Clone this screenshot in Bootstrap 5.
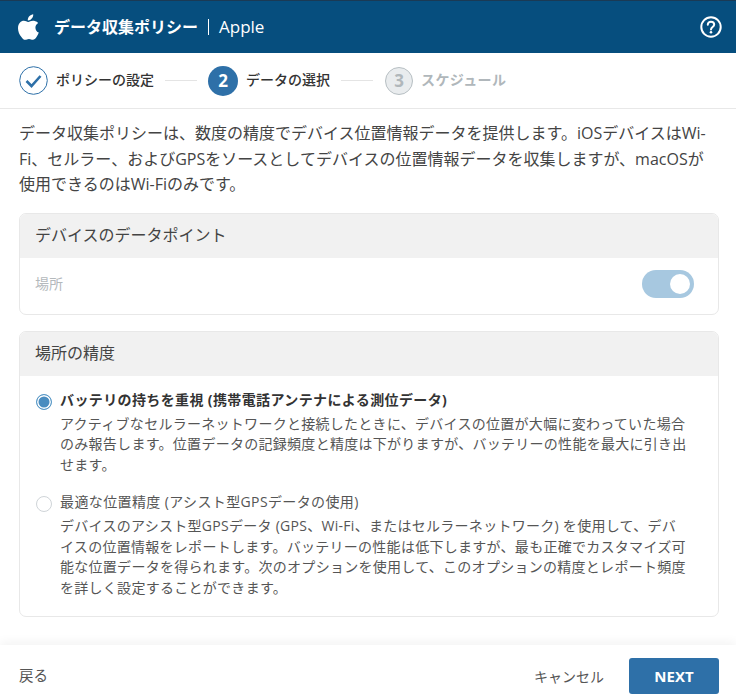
<!DOCTYPE html>
<html lang="ja"><head><meta charset="utf-8"><title>データ収集ポリシー</title>
<link href="https://cdn.jsdelivr.net/npm/bootstrap@5.3.0/dist/css/bootstrap.min.css" rel="stylesheet">
<style>
html,body{height:699px;overflow:hidden;background:#fff}
body{font-family:"Open Sans","Noto Sans CJK JP",sans-serif;color:#333;font-size:15px}
.wiz{height:699px}
.wiz-head{height:53px;background:#064e7e;border-top:1px solid #1a3a55;color:#fff;padding:0 14px 0 18px}
.wiz-logo{width:22px;height:26px;margin-right:14px}
.wiz-title{font-size:16px;font-weight:700}
.wiz-sep{width:1px;height:16px;background:#fff;margin:0 10px}
.wiz-vendor{font-size:17px}
.wiz-steps{height:56px;border-bottom:1px solid #e8e8e8;padding-left:19px}
.step-ico{width:29px;height:29px;flex:none}
.step-num{width:30px;height:30px;border-radius:50%;font-weight:700;font-size:17px;flex:none}
.step-on{background:#2e70a8;color:#fff}
.step-off{background:#e9ecee;color:#b0b7bb;border:1px solid #b7bfc3;width:28px;height:28px;margin-left:1px}
.step-lbl{font-size:14px;font-weight:500;color:#333;margin-left:8px;padding-bottom:2px}
.step-mute{color:#b0b7bb;font-weight:700;letter-spacing:.4px}
.step-line{width:32px;height:1px;background:#e4e4e4;margin:0 11px}
.wiz-intro{font-size:16px;line-height:25.5px;margin:12px 19px 15px;color:#444}
.sec{margin:0 17px 16px 19px;border:1px solid #e8e8e8;border-radius:7px;--bs-card-bg:#fff}
.sec .card-header{background:#f1f1f1;border:0;height:44px;padding:0 15px;font-size:16px;line-height:43px;color:#444;border-radius:6px 6px 0 0}
.sec-row{height:56px;padding:0 24px 4px 15px;font-size:14px;color:#b4b9bc}
.tog{width:52px;height:28px;border-radius:14px;background:#a7c8e0;position:relative}
.tog::after{content:"";position:absolute;right:4px;top:4px;width:20px;height:20px;border-radius:50%;background:#fff}
.sec-opts{padding:13px 16px 2px}
.opt{display:flex;margin-bottom:15px}
.rad{width:16px;height:16px;border-radius:50%;flex:none;margin:5px 8px 0 0;border:1px solid #cfd4d8;background:#fff}
.rad-on{border-color:#5a9ac8;box-shadow:inset 0 0 0 1.5px #fff;background:#4a8dc0}
.opt-t{font-size:14px;letter-spacing:.38px;line-height:22px;color:#555}
.opt-t.bold{font-weight:700;color:#333}
.opt-d{font-size:14px;letter-spacing:.28px;line-height:20.75px;color:#555;margin:3px 0 0;width:630px}
.wiz-foot{position:absolute;left:0;right:0;top:645px;height:54px;padding:8px 17px 0 19px;background:#fff;box-shadow:0 -3px 10px rgba(0,0,0,.05);font-size:14px;color:#555}
.wiz-back{font-size:14.5px}
.wiz-next{width:90px;height:36px;background:#2e70a8;color:#fff;font-weight:700;font-size:15px;border:0;border-radius:3px;margin-left:25px;padding:0}
.wiz-next:hover{background:#2e70a8;color:#fff}
</style></head><body>
<div class="wiz position-relative">
<header class="wiz-head d-flex align-items-center">
<svg class="wiz-logo" viewBox="0 0 24 28" fill="#fff"><path d="M16.6 0c.2 2-.6 3.6-1.600 4.800-1 1.300-2.700 2.300-4.300 2.100-.2-1.800.6-3.600 1.600-4.700C13.400 1 15.200.1 16.600 0z"/><path d="M22 9.700c-1.900 1.200-3 2.900-3 5 0 2.500 1.500 4.500 3.700 5.400-.6 1.800-1.400 3.400-2.500 4.900-1.300 1.800-2.400 3-4 3-1.600 0-2.300-1-4.200-1-1.900 0-2.700 1-4.200 1-1.700 0-2.900-1.400-4.300-3.400C1.500 22.300 0 18.700 0 15.300c0-5.100 3.300-8 6.500-8 1.800 0 3.300 1.200 4.700 1.200 1.300 0 3-1.300 5.100-1.300 1.300 0 3.900.4 5.700 2.500z"/></svg>
<span class="wiz-title">データ収集ポリシー</span><span class="wiz-sep"></span><span class="wiz-vendor">Apple</span>
<svg class="ms-auto" width="22" height="22" viewBox="0 0 22 22" fill="none" stroke="#fff" stroke-width="2"><circle cx="11" cy="11" r="9.700"/><path d="M7.800 8.700c0-1.900 1.400-3 3.200-3s3.200 1.100 3.200 2.800c0 2.600-3.200 2.400-3.200 5" stroke-linecap="round"/><circle cx="11" cy="16.300" r="1.300" fill="#fff" stroke="none"/></svg>
</header>
<nav class="wiz-steps d-flex align-items-center">
<svg class="step-ico" viewBox="0 0 29 29" fill="none"><circle cx="14.500" cy="14.500" r="13.800" stroke="#2e70a8" stroke-width="1"/><path d="M7.500 15l5 5 9-10" stroke="#2e70a8" stroke-width="2.600"/></svg>
<span class="step-lbl">ポリシーの設定</span><span class="step-line"></span>
<span class="step-num step-on d-flex align-items-center justify-content-center">2</span>
<span class="step-lbl">データの選択</span><span class="step-line"></span>
<span class="step-num step-off d-flex align-items-center justify-content-center">3</span>
<span class="step-lbl step-mute">スケジュール</span>
</nav>
<p class="wiz-intro">データ収集ポリシーは、数度の精度でデバイス位置情報データを提供します。iOSデバイスはWi-Fi、セルラー、およびGPSをソースとしてデバイスの位置情報データを収集しますが、macOSが使用できるのはWi-Fiのみです。</p>
<section class="card sec">
<div class="card-header">デバイスのデータポイント</div>
<div class="sec-row d-flex align-items-center justify-content-between"><span>場所</span><span class="tog"></span></div>
</section>
<section class="card sec">
<div class="card-header">場所の精度</div>
<div class="sec-opts">
<div class="opt"><span class="rad rad-on"></span><div><div class="opt-t bold">バッテリの持ちを重視 (携帯電話アンテナによる測位データ)</div><p class="opt-d">アクティブなセルラーネットワークと接続したときに、デバイスの位置が大幅に変わっていた場合のみ報告します。位置データの記録頻度と精度は下がりますが、バッテリーの性能を最大に引き出せます。</p></div></div>
<div class="opt"><span class="rad"></span><div><div class="opt-t">最適な位置精度 (アシスト型GPSデータの使用)</div><p class="opt-d">デバイスのアシスト型GPSデータ (GPS、Wi-Fi、またはセルラーネットワーク) を使用して、デバイスの位置情報をレポートします。バッテリーの性能は低下しますが、最も正確でカスタマイズ可能な位置データを得られます。次のオプションを使用して、このオプションの精度とレポート頻度を詳しく設定することができます。</p></div></div>
</div>
</section>
<footer class="wiz-foot d-flex align-items-center">
<span class="wiz-back">戻る</span><span class="ms-auto">キャンセル</span><button class="btn wiz-next" type="button">NEXT</button>
</footer>
</div>
<script src="https://cdn.jsdelivr.net/npm/bootstrap@5.3.0/dist/js/bootstrap.bundle.min.js"></script>
</body></html>
